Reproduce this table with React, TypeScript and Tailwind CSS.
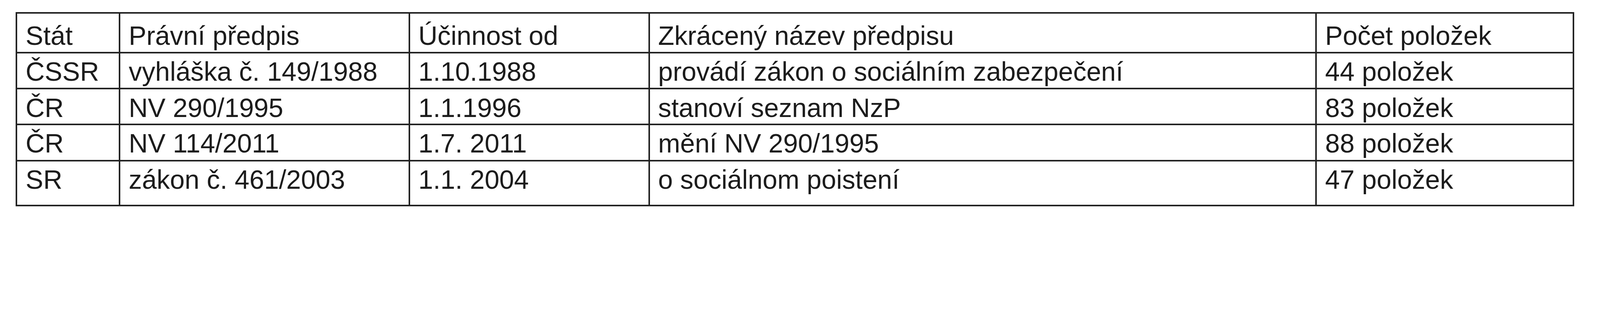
const columns = [
  { key: 'stat', label: 'Stát', width: 'w-[374px] border-r-[6px]' },
  { key: 'predpis', label: 'Právní předpis', width: 'w-[1050px] border-r-[6px]' },
  { key: 'ucinnost', label: 'Účinnost od', width: 'w-[869px] border-r-[6px]' },
  { key: 'nazev', label: 'Zkrácený název předpisu', width: 'w-[2418px] border-r-[6px]' },
  { key: 'pocet', label: 'Počet položek', width: 'w-[926px]' },
];

const rows = [
  {
    stat: 'ČSSR',
    predpis: 'vyhláška č. 149/1988',
    ucinnost: '1.10.1988',
    nazev: 'provádí zákon o sociálním zabezpečení',
    pocet: '44 položek',
    height: 'h-[131px] border-b-[6px]',
  },
  {
    stat: 'ČR',
    predpis: 'NV 290/1995',
    ucinnost: '1.1.1996',
    nazev: 'stanoví seznam NzP',
    pocet: '83 položek',
    height: 'h-[130px] border-b-[6px]',
  },
  {
    stat: 'ČR',
    predpis: 'NV 114/2011',
    ucinnost: '1.7. 2011',
    nazev: 'mění NV 290/1995',
    pocet: '88 položek',
    height: 'h-[131px] border-b-[6px]',
  },
  {
    stat: 'SR',
    predpis: 'zákon č. 461/2003',
    ucinnost: '1.1. 2004',
    nazev: 'o sociálnom poistení',
    pocet: '47 položek',
    height: 'h-[158px]',
  },
];

// The table is laid out for a 5800px wide page; shrink it evenly when the window is narrower.
const DESIGN_WIDTH = 5800;

export default function App() {
  const scale =
    typeof window !== 'undefined' ? Math.min(1, window.innerWidth / DESIGN_WIDTH) : 1;

  return (
    <div className="w-full h-[800px] bg-white overflow-hidden">
      <div
        className="w-[5800px] pl-[57px] pt-[44px] text-[#1c1c1c]"
        style={{ zoom: scale, fontFamily: '"Liberation Sans", Arial, sans-serif' }}
      >
        <div className="w-[5649px] border-[6px] border-[#222222]">
          {/* Header */}
          <div className="flex h-[144px] border-b-[6px] border-[#222222]">
            {columns.map((col) => (
              <div
                key={col.key}
                className={`${col.width} shrink-0 border-[#222222] pl-[30px] pt-[33px] text-[96px] leading-none whitespace-nowrap`}
              >
                {col.label}
              </div>
            ))}
          </div>

          {/* Body rows */}
          {rows.map((row, i) => (
            <div key={i} className={`flex ${row.height} border-[#222222]`}>
              {columns.map((col) => (
                <div
                  key={col.key}
                  className={`${col.width} shrink-0 border-[#222222] pl-[30px] pt-[19px] text-[96px] leading-none whitespace-nowrap`}
                >
                  {row[col.key as keyof typeof row]}
                </div>
              ))}
            </div>
          ))}
        </div>
      </div>
    </div>
  );
}
